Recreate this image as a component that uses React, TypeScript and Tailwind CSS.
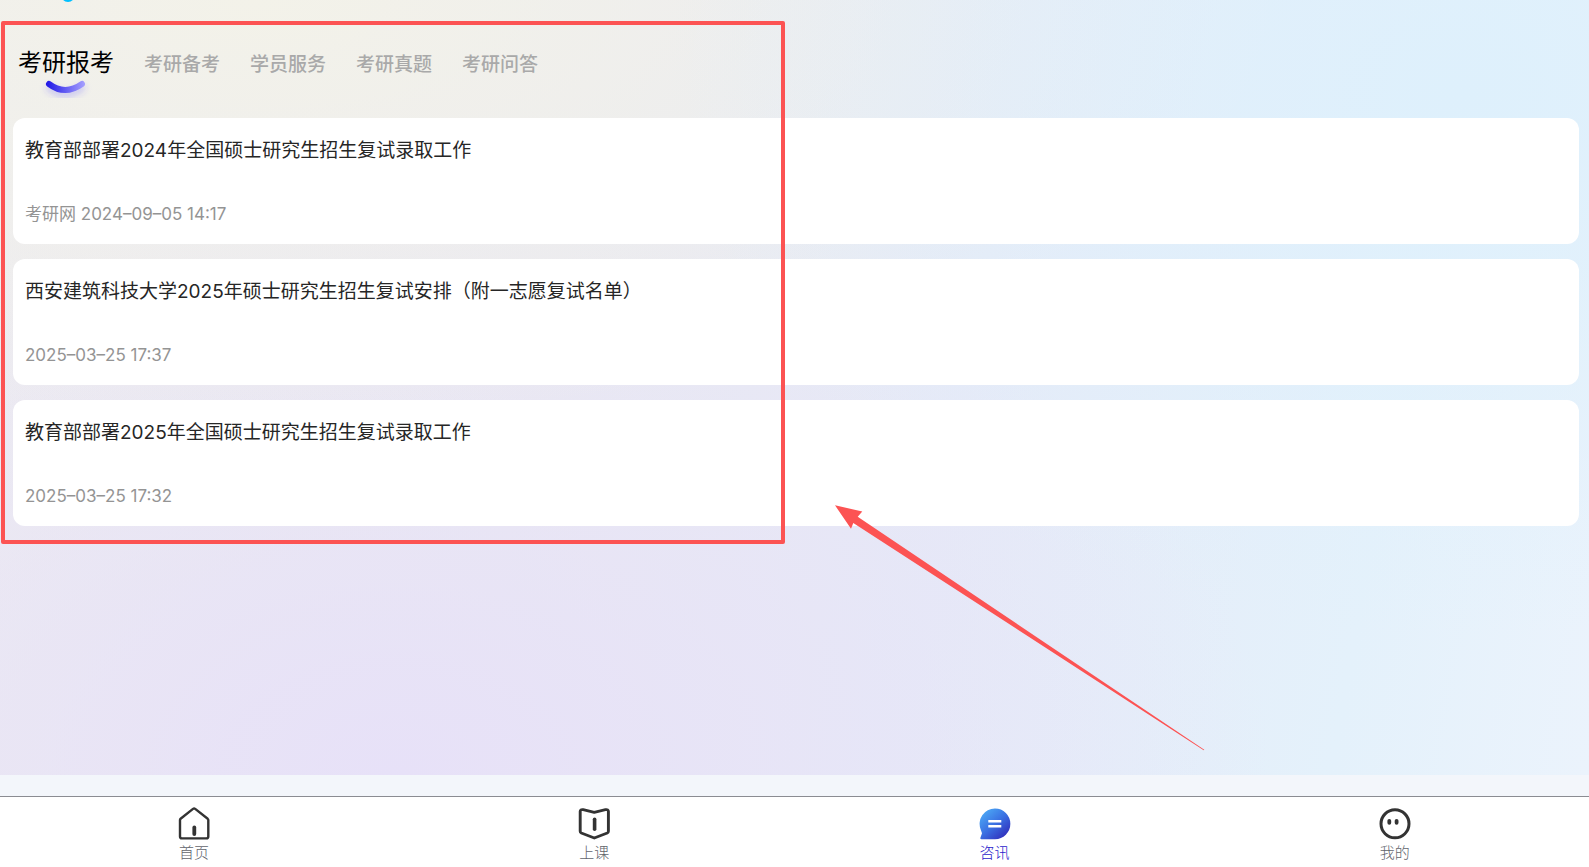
import React from "react";

const tabs = ["考研报考", "考研备考", "学员服务", "考研真题", "考研问答"];

const articles = [
  { title: "教育部部署2024年全国硕士研究生招生复试录取工作", meta: "考研网 2024–09–05 14:17" },
  { title: "西安建筑科技大学2025年硕士研究生招生复试安排（附一志愿复试名单）", meta: "2025–03–25 17:37" },
  { title: "教育部部署2025年全国硕士研究生招生复试录取工作", meta: "2025–03–25 17:32" },
];

function HomeIcon() {
  return (
    <svg viewBox="0 0 32 34" className="h-[34px] w-8" fill="none" stroke="#333" strokeWidth="2.4" strokeLinejoin="round" strokeLinecap="round" aria-hidden="true">
      <path d="M2 14v16.500q0 1.900 1.900 1.900h24.500q1.900 0 1.900-1.900V14q0-.7-.6-1.200L17.200 2.900q-1.100-.8-2.200 0L2.600 12.800Q2 13.300 2 14Z" />
      <path d="M16.300 21.500v6.500" strokeWidth="3.8" />
    </svg>
  );
}

function BookIcon() {
  return (
    <svg viewBox="0 0 32 34" className="h-[34px] w-8" fill="none" stroke="#333" strokeWidth="2.9" strokeLinejoin="round" strokeLinecap="round" aria-hidden="true">
      <path d="M16.300 6.300 5.200 3.700Q2.200 3.100 2.200 5.600V25.300q0 1.200 1.100 1.700L16.300 32l13-5q1.100-.5 1.100-1.700V5.600q0-2.500-3-1.900L16.300 6.300Z" />
      <path d="M16.600 13.300v10" strokeWidth="3.6" />
    </svg>
  );
}

function NewsIcon() {
  return (
    <svg viewBox="0 0 32 34" className="h-[34px] w-8" aria-hidden="true">
      <defs>
        <linearGradient id="news" x1="0.15" y1="0.1" x2="0.85" y2="0.9">
          <stop offset="0" stopColor="#4ba5f4" />
          <stop offset="0.5" stopColor="#3a70e2" />
          <stop offset="1" stopColor="#3131bd" />
        </linearGradient>
      </defs>
      <path d="M16 2.500A15.300 15.300 0 0 1 16 33.200H2.600Q.8 33.200 1.500 31.500L3 27.300 1.700 23.500A15.300 15.300 0 0 1 16 2.500Z" fill="url(#news)" />
      <path d="M9.300 15.300h13M9.300 20.300h13" stroke="#fff" strokeWidth="2.4" />
    </svg>
  );
}

function ProfileIcon() {
  return (
    <svg viewBox="0 0 32 34" className="h-[34px] w-8" fill="none" stroke="#333" strokeLinecap="round" aria-hidden="true">
      <circle cx="16" cy="17.800" r="14" strokeWidth="3" />
      <path d="M10.300 14.800v2M17.600 14.800v2" strokeWidth="3.8" />
    </svg>
  );
}

const navItems = [
  { label: "首页", Icon: HomeIcon },
  { label: "上课", Icon: BookIcon },
  { label: "咨讯", Icon: NewsIcon },
  { label: "我的", Icon: ProfileIcon },
];

export default function App() {
  return (
    <div className="relative flex min-h-screen flex-col overflow-hidden bg-[#f3f6fb] font-['Inter','Noto_Sans_CJK_SC',sans-serif]">
      <main className="relative mb-[21px] grow bg-[radial-gradient(ellipse_50%_70%_at_92%_12%,#def0fc_0%,#def0fc00_100%),radial-gradient(ellipse_65%_55%_at_16%_0%,#f3f2e9_0%,#f3f2e900_100%),radial-gradient(ellipse_55%_75%_at_25%_100%,#e7e1f8_0%,#e7e1f800_100%),linear-gradient(100deg,#edecf0_0%,#eaeaf1_35%,#e6eaf7_60%,#e4f1fb_85%,#ebf3fc_100%)] pt-[42px] pr-[10px] pl-[13px]">
        <span className="absolute -top-3 left-[61px] size-3.5 rounded-full bg-[#00c0ff]" />
        <div role="tablist" className="mb-[23px] flex h-[53px] items-start gap-[30px] pl-[5px]">
          {tabs.map((tab, i) => (
            <button
              key={tab}
              role="tab"
              aria-selected={i === 0}
              className={
                i === 0
                  ? "relative text-2xl leading-[41px] text-black"
                  : "text-[19px] leading-[46px] font-medium text-[#a9a9a9]"
              }
            >
              {tab}
              {i === 0 && (
                <svg viewBox="0 0 60 32" className="absolute top-[34px] left-1/2 h-8 w-[60px] -translate-x-1/2" fill="none" aria-hidden="true">
                  <defs>
                    <linearGradient id="smile" x1="10" x2="50" y1="0" y2="0" gradientUnits="userSpaceOnUse">
                      <stop offset="0" stopColor="#1f16e6" />
                      <stop offset="1" stopColor="#aaa4ff" />
                    </linearGradient>
                    <filter id="glow" x="-30%" y="-80%" width="160%" height="300%">
                      <feDropShadow dx="0" dy="4" stdDeviation="3" floodColor="#4a40ff" floodOpacity="0.25" />
                    </filter>
                  </defs>
                  <path d="M13 8Q29 20 46 8" stroke="url(#smile)" strokeWidth="6" strokeLinecap="round" filter="url(#glow)" />
                </svg>
              )}
            </button>
          ))}
        </div>
        <div className="flex flex-col gap-[15px]">
          {articles.map((a) => (
            <article key={a.title} className="flex h-[126px] flex-col justify-between rounded-xl bg-white px-3 py-[18px]">
              <h2 className="text-[19px] leading-[30px] text-[#262626]">
                <a href="#">{a.title}</a>
              </h2>
              <p className="text-[17px] leading-6 text-[#949494]">{a.meta}</p>
            </article>
          ))}
        </div>
      </main>
      <nav className="border-t border-[#8b8c92] bg-white">
        <div className="-mx-1.5 grid h-[70px] grid-cols-4 pt-[9px]">
          {navItems.map(({ label, Icon }, i) => (
            <a
              key={label}
              href="#"
              className={
                i === 2
                  ? "flex flex-col items-center text-[15px] leading-[26px] font-light text-[#2a1acc]"
                  : "flex flex-col items-center text-[15px] leading-[26px] font-light text-[#62646c]"
              }
            >
              <Icon />
              {label}
            </a>
          ))}
        </div>
      </nav>
      <div className="pointer-events-none absolute top-[21px] left-px h-[523px] w-[784px] rounded-[2px] border-4 border-[#fc5353]" />
      <svg viewBox="0 0 370 246" className="pointer-events-none absolute top-[505px] left-[835px] h-[246px] w-[370px]" fill="#fc5353" aria-hidden="true">
        <path d="M0 .3 27.300 6.500 22.700 11.800 369.300 244.700 368.700 245.300 18.300 18 16 23.800Z" />
      </svg>
    </div>
  );
}
